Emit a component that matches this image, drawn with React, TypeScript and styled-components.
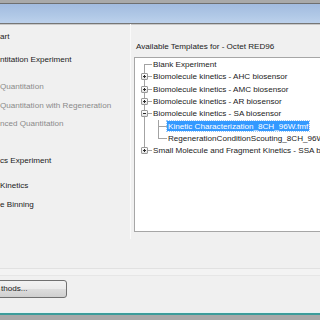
import React from "react";
import styled, { createGlobalStyle } from "styled-components";

const GlobalStyle = createGlobalStyle`
  html, body { margin: 0; padding: 0; background: #f0f0f0; }
  body { font-family: "Liberation Sans", Arial, sans-serif; }
`;

const LINE = "#a3a3a3";

interface ILeftItem {
  label: string;
  gap: number;
  muted?: boolean;
}

const leftItems: Array<ILeftItem> = [
  { label: "art", gap: 7 },
  { label: "ntitation Experiment", gap: 11 },
  { label: "Quantitation", gap: 15, muted: true },
  { label: "Quantitation with Regeneration", gap: 7, muted: true },
  { label: "nced Quantitation", gap: 6, muted: true },
  { label: "cs Experiment", gap: 25 },
  { label: "Kinetics", gap: 13 },
  { label: "e Binning", gap: 7 },
];

interface ITreeItem {
  label: string;
  depth: number;
  up?: boolean;
  down?: boolean;
  expander?: "plus" | "minus";
  selected?: boolean;
}

const treeItems: Array<ITreeItem> = [
  { label: "Blank Experiment", depth: 0, down: true },
  { label: "Biomolecule kinetics - AHC biosensor", depth: 0, up: true, down: true, expander: "plus" },
  { label: "Biomolecule kinetics - AMC biosensor", depth: 0, up: true, down: true, expander: "plus" },
  { label: "Biomolecule kinetics - AR biosensor", depth: 0, up: true, down: true, expander: "plus" },
  { label: "Biomolecule kinetics - SA biosensor", depth: 0, up: true, down: true, expander: "minus" },
  { label: "Kinetic Characterization_8CH_96W.fmf", depth: 1, up: true, down: true, selected: true },
  { label: "RegenerationConditionScouting_8CH_96W.fmf", depth: 1, up: true },
  { label: "Small Molecule and Fragment Kinetics - SSA biosensor", depth: 0, up: true, expander: "plus" },
];

// tree connector lines drawn as layered backgrounds
const connector = (x: number, up?: boolean, down?: boolean, h = true) => {
  const layers: string[] = [];
  if (up && down) layers.push(`linear-gradient(${LINE},${LINE}) ${x}px 0 / 1px 100% no-repeat`);
  else if (up) layers.push(`linear-gradient(${LINE},${LINE}) ${x}px 0 / 1px 50% no-repeat`);
  else if (down) layers.push(`linear-gradient(${LINE},${LINE}) ${x}px 100% / 1px 50% no-repeat`);
  if (h) layers.push(`linear-gradient(${LINE},${LINE}) ${x}px 50% / calc(100% - ${x}px) 1px no-repeat`);
  return layers.join(", ") || "none";
};

export default function App() {
  return (
    <>
      <GlobalStyle />
      <Window>
        <TopEdge />
        <Caption />
        <Body>
          <LeftPanel>
            {leftItems.map((item) => (
              <LeftRow key={item.label} $gap={item.gap} $muted={item.muted}>
                {item.label}
              </LeftRow>
            ))}
          </LeftPanel>
          <RightPanel>
            <GroupLabel>Available Templates for - Octet RED96</GroupLabel>
            <TreeBox>
              {treeItems.map((item) => (
                <TreeRow key={item.label}>
                  <Gutter
                    $w={17}
                    style={{
                      background:
                        item.depth === 0
                          ? connector(9, item.up, item.down)
                          : connector(9, true, true, false),
                    }}
                  >
                    {item.depth === 0 && item.expander && (
                      <Expander>
                        <Sign $minus={item.expander === "minus"} />
                      </Expander>
                    )}
                  </Gutter>
                  {item.depth === 1 && (
                    <Gutter $w={15} style={{ background: connector(6, item.up, item.down) }} />
                  )}
                  <NodeLabel $selected={item.selected}>{item.label}</NodeLabel>
                </TreeRow>
              ))}
            </TreeBox>
          </RightPanel>
        </Body>
        <Footer>
          <Separator />
          <ButtonRow>
            <WinButton>thods...</WinButton>
          </ButtonRow>
        </Footer>
        <TaskEdge />
      </Window>
    </>
  );
}

const Window = styled.div`
  width: 320px;
  height: 320px;
  overflow: hidden;
  display: flex;
  flex-direction: column;
  background: #f0f0f0;
  font-size: 8.1px;
  color: #1b1b1b;
`;

const TopEdge = styled.div`
  height: 3px;
  background: #a9a9a9;
  border-bottom: 1px solid #6f6f6f;
  flex: none;
`;

const Caption = styled.div`
  height: 19px;
  flex: none;
  background: linear-gradient(180deg, #a2bbdf 0%, #b0c8e6 60%, #bcd1ec 100%);
  border-bottom: 1px solid #767676;
  box-shadow: 0 1px 0 #c9c9c9;
`;

const Body = styled.div`
  display: flex;
  height: 215px;
  flex: none;
`;

const LeftPanel = styled.div`
  width: 130px;
  flex: none;
  display: flex;
  flex-direction: column;
  border-right: 1px solid #fafafa;
  overflow: hidden;
  white-space: nowrap;
`;

const LeftRow = styled.div<{ $gap: number; $muted?: boolean }>`
  margin-top: ${(p) => p.$gap}px;
  height: 12px;
  line-height: 12px;
  color: ${(p) => (p.$muted ? "#8a8a8a" : "#1b1b1b")};
`;

const RightPanel = styled.div`
  flex: 1;
  display: flex;
  flex-direction: column;
  padding: 17px 0 0 3px;
  min-width: 0;
`;

const GroupLabel = styled.div`
  height: 12px;
  line-height: 12px;
  margin-left: 2px;
  white-space: nowrap;
`;

const TreeBox = styled.div`
  margin-top: 4px;
  height: 172px;
  width: 260px;
  flex: none;
  background: #ffffff;
  border: 1px solid #a6a6a6;
  display: flex;
  flex-direction: column;
  padding-top: 0.5px;
  overflow: hidden;
`;

const TreeRow = styled.div`
  display: flex;
  height: 12.3px;
  align-items: stretch;
  white-space: nowrap;
`;

const Gutter = styled.span<{ $w: number }>`
  width: ${(p) => p.$w}px;
  flex: none;
  display: flex;
  align-items: center;
  padding-left: 6px;
  box-sizing: border-box;
`;

const Expander = styled.span`
  width: 7px;
  height: 7px;
  box-sizing: border-box;
  border: 1px solid #9a9a9a;
  border-radius: 1px;
  background: linear-gradient(180deg, #ffffff, #e2e2e2);
  display: flex;
  align-items: center;
  justify-content: center;
`;

const Sign = styled.span<{ $minus?: boolean }>`
  width: 3px;
  height: 3px;
  background:
    linear-gradient(#2b2b2b, #2b2b2b) 0 1px / 3px 1px no-repeat
    ${(p) => (p.$minus ? "" : ", linear-gradient(#2b2b2b, #2b2b2b) 1px 0 / 1px 3px no-repeat")};
`;

const NodeLabel = styled.span<{ $selected?: boolean }>`
  display: flex;
  align-items: center;
  padding: 0 1px;
  margin: 1px 0;
  background: ${(p) => (p.$selected ? "#3399ff" : "transparent")};
  color: ${(p) => (p.$selected ? "#ffffff" : "#1b1b1b")};
  outline: ${(p) => (p.$selected ? "1px dotted #9ec9f5" : "none")};
`;

const Footer = styled.div`
  flex: 1;
  display: flex;
  flex-direction: column;
  padding-top: 29px;
`;

const Separator = styled.div`
  height: 6px;
  border-top: 1px solid #e1e1e1;
  border-bottom: 1px solid #e6e6e6;
  background: #f3f3f3;
`;

const ButtonRow = styled.div`
  display: flex;
  padding-top: 4px;
`;

const WinButton = styled.div`
  margin-left: -3px;
  width: 70px;
  height: 18px;
  box-sizing: border-box;
  border: 1px solid #707070;
  border-radius: 3px;
  background: linear-gradient(180deg, #f2f2f2 0%, #ebebeb 48%, #dddddd 52%, #cfcfcf 100%);
  line-height: 16px;
  padding-left: 3px;
  color: #1b1b1b;
`;

const TaskEdge = styled.div`
  height: 7px;
  flex: none;
  background: #a8a8a8;
  border-top: 1px solid #e6f3f3;
  box-shadow: inset 0 2px 0 #3d9c9a;
`;
